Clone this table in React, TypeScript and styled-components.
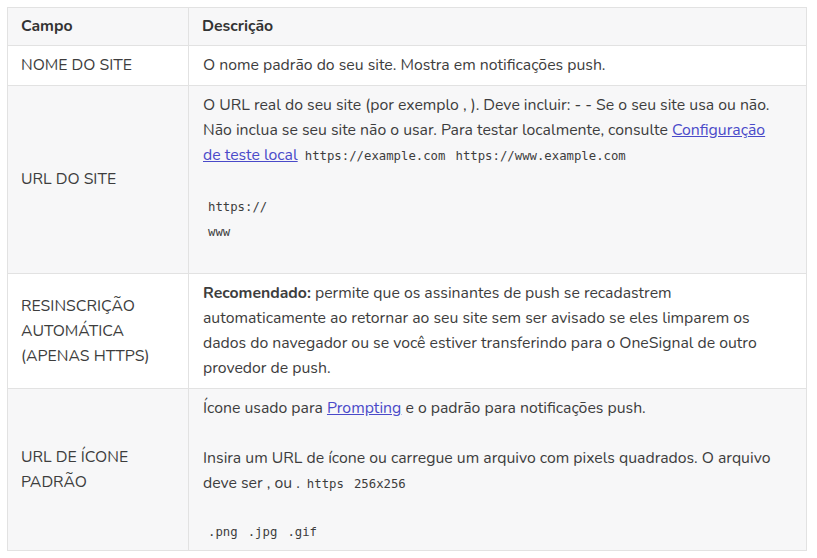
import React from "react";
import styled, { createGlobalStyle } from "styled-components";

const Global = createGlobalStyle`
  html, body { margin: 0; padding: 0; background: #ffffff; }
  body { font-family: "Nunito", "Open Sans", "Noto Sans", sans-serif; color: #3d3d3d; }
`;

const Wrap = styled.div`
  padding: 7px 10px 7px 7px;
`;

const Table = styled.table`
  width: 800px;
  border-collapse: collapse;
  font-size: 15.8px;
  line-height: 25px;
  color: #3d3d3d;
  table-layout: fixed;
`;

const Row = styled.tr<{ $shade?: boolean }>`
  background: ${(p) => (p.$shade ? "#f7f7f8" : "#ffffff")};
`;

const Th = styled.th`
  text-align: left;
  font-weight: 700;
  padding: 6px 14px 6px 13px;
  border: 1px solid #e2e2e2;
  color: #333333;
`;

const Td = styled.td`
  padding: 7px 22px 7px 14px;
  border: 1px solid #e2e2e2;
  vertical-align: middle;
`;

const FieldName = styled(Td)`
  text-transform: uppercase;
  padding-left: 13px;
  padding-right: 10px;
`;

const Link = styled.a`
  color: #4a4ac9;
  text-decoration: underline;
`;

const Code = styled.code`
  font-family: "DejaVu Sans Mono", "Liberation Mono", monospace;
  font-size: 12.3px;
  margin: 0 3px;
  color: #3d3d3d;
`;

const Line = styled.div<{ $h?: number }>`
  min-height: ${(p) => p.$h ?? 25}px;
`;

const CodeLine = styled.div<{ $h?: number }>`
  min-height: ${(p) => p.$h ?? 24}px;
  line-height: ${(p) => p.$h ?? 24}px;
  padding-left: 2px;
`;

export default function App() {
  return (
    <Wrap>
      <Global />
      <Table>
        <colgroup>
          <col style={{ width: 181 }} />
          <col />
        </colgroup>
        <thead>
          <Row $shade>
            <Th>Campo</Th>
            <Th>Descrição</Th>
          </Row>
        </thead>
        <tbody>
          <Row>
            <FieldName>Nome do site</FieldName>
            <Td>O nome padrão do seu site. Mostra em notificações push.</Td>
          </Row>
          <Row $shade>
            <FieldName>URL do site</FieldName>
            <Td>
              <Line>
                O URL real do seu site (por exemplo , ). Deve incluir: - - Se o seu site usa ou não. Não inclua se seu
                site não o usar. Para testar localmente, consulte <Link href="#">Configuração de teste local</Link>{" "}
                <Code>https://example.com</Code> <Code>https://www.example.com</Code>
              </Line>
              <Line />
              <CodeLine>
                <Code>https://</Code>
              </CodeLine>
              <CodeLine>
                <Code>www</Code>
              </CodeLine>
              <CodeLine $h={22} />
            </Td>
          </Row>
          <Row>
            <FieldName>Resinscrição automática (apenas HTTPS)</FieldName>
            <Td>
              <strong>Recomendado:</strong> permite que os assinantes de push se recadastrem automaticamente ao
              retornar ao seu site sem ser avisado se eles limparem os dados do navegador ou se você estiver
              transferindo para o OneSignal de outro provedor de push.
            </Td>
          </Row>
          <Row $shade>
            <FieldName>URL de ícone padrão</FieldName>
            <Td>
              <Line>
                Ícone usado para <Link href="#">Prompting</Link> e o padrão para notificações push.
              </Line>
              <Line />
              <Line>
                Insira um URL de ícone ou carregue um arquivo com pixels quadrados. O arquivo deve ser , ou .{" "}
                <Code>https</Code> <Code>256x256</Code>
              </Line>
              <Line $h={23} />
              <CodeLine $h={22}>
                <Code>.png</Code> <Code>.jpg</Code> <Code>.gif</Code>
              </CodeLine>
            </Td>
          </Row>
        </tbody>
      </Table>
    </Wrap>
  );
}
